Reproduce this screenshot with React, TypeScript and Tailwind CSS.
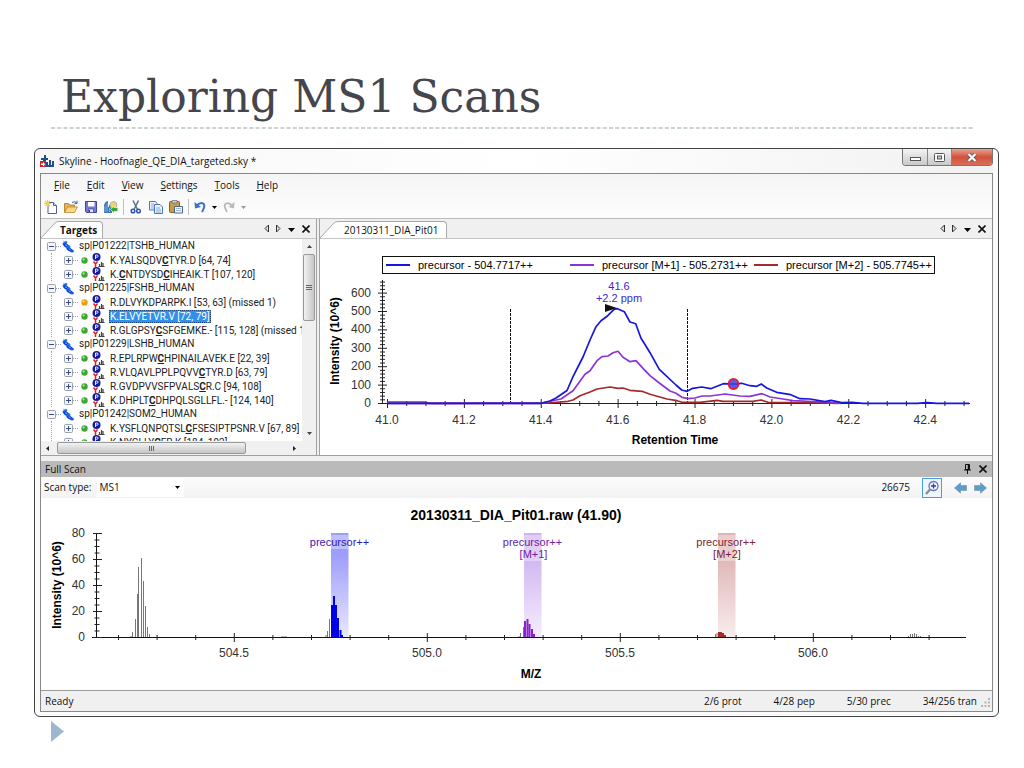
import { ReactNode, useState } from 'react';

const UI = "font-['Open_Sans','Noto_Sans',sans-serif]";
const ARIAL = "font-['Liberation_Sans',Arial,sans-serif]";

type Peptide = { seq: string; range: string; dot?: string };
type Protein = { name: string; peptides: Peptide[] };

// '*' marks the modified cysteine that follows it
const proteins: Protein[] = [
  {
    name: 'sp|P01222|TSHB_HUMAN',
    peptides: [
      { seq: 'K.YALSQDV*CTYR.D', range: '[64, 74]' },
      { seq: 'K.*CNTDYSD*CIHEAIK.T', range: '[107, 120]' },
    ],
  },
  {
    name: 'sp|P01225|FSHB_HUMAN',
    peptides: [
      { seq: 'R.DLVYKDPARPK.I', range: '[53, 63] (missed 1)', dot: '#e8a010' },
      { seq: 'K.ELVYETVR.V', range: '[72, 79]' },
      { seq: 'R.GLGPSY*CSFGEMKE.-', range: '[115, 128] (missed 1)' },
    ],
  },
  {
    name: 'sp|P01229|LSHB_HUMAN',
    peptides: [
      { seq: 'R.EPLRPW*CHPINAILAVEK.E', range: '[22, 39]' },
      { seq: 'R.VLQAVLPPLPQVV*CTYR.D', range: '[63, 79]' },
      { seq: 'R.GVDPVVSFPVALS*CR.C', range: '[94, 108]' },
      { seq: 'K.DHPLT*CDHPQLSGLLFL.-', range: '[124, 140]' },
    ],
  },
  {
    name: 'sp|P01242|SOM2_HUMAN',
    peptides: [
      { seq: 'K.YSFLQNPQTSL*CFSESIPTPSNR.V', range: '[67, 89]' },
      { seq: 'K.NYGLLY*CFR.K', range: '[184, 192]' },
    ],
  },
];

const menus = ['File', 'Edit', 'View', 'Settings', 'Tools', 'Help'];

function AppIcon() {
  return (
    <svg className="w-[14px] h-[13px]" viewBox="0 0 14 13">
      <path d="M4 0h2v3h2v2H6v2H3V5H1V3h3z" fill="#1d4f91" />
      <path d="M0 6h6v6H0z" fill="#d3222a" />
      <path d="M1 8.500h2V7l2.200 2.200L3 11.500V10H1z" fill="#fff" />
      <path d="M6 12V7h2v3h1V5h2v5h1V6h2v6z" fill="#1d4f91" />
    </svg>
  );
}

function ExpandBox({ open, onClick, label }: { open: boolean; onClick?: () => void; label: string }) {
  return (
    <button aria-label={label} onClick={onClick} className="block shrink-0 w-[9px] h-[9px]">
      <svg viewBox="0 0 9 9" className="w-[9px] h-[9px]">
        <rect x="0.5" y="0.5" width="8" height="8" rx="1" fill="#f4f5f8" stroke="#9aa1ac" />
        <path d={open ? 'M2 4.500h5' : 'M2 4.500h5M4.500 2v5'} stroke="#3b4c86" />
      </svg>
    </button>
  );
}

function ProteinIcon() {
  return (
    <svg className="w-3 h-[13px] shrink-0" viewBox="0 0 12 13">
      <ellipse cx="3" cy="3" rx="2.600" ry="1.600" transform="rotate(-35 3 3)" fill="#1a78e6" />
      <ellipse cx="4" cy="5.500" rx="3" ry="1.800" transform="rotate(25 4 5.500)" fill="#0b3fd0" />
      <ellipse cx="6.300" cy="7.300" rx="2.400" ry="1.700" transform="rotate(-35 6.300 7.300)" fill="#1a78e6" />
      <ellipse cx="7.500" cy="9.500" rx="3" ry="1.700" transform="rotate(25 7.500 9.500)" fill="#0b3fd0" />
      <ellipse cx="10" cy="11" rx="1.900" ry="1.500" fill="#1558dc" />
      <path d="M1 .8l1.500.8M3 4.800l2 .8M6.500 8.800l2 .8" stroke="#7cc4fa" strokeWidth="0.900" />
    </svg>
  );
}

function PeptideIcon() {
  return (
    <svg className="w-[14px] h-[14px] shrink-0" viewBox="0 0 14 14">
      <circle cx="5.500" cy="4" r="4" fill="#131a9c" />
      <path d="M4.500 6V2h1.500a1 1 0 0 1 0 2.200H4.500" fill="none" stroke="#fff" strokeWidth="0.900" />
      <path d="M2.500 8.500l2 2.500 2-2.500M4.500 11v3" fill="none" stroke="#e32020" strokeWidth="1.500" />
      <path d="M7.500 13.500h6M8.500 13v-2M10.500 13V9M12 13v-3" stroke="#444" strokeWidth="1.200" />
    </svg>
  );
}

function Sequence({ seq }: { seq: string }) {
  return (
    <>
      {seq.split('*').map((part, i) =>
        i === 0 ? part : (
          <span key={i}>
            <b className="underline">{part[0]}</b>
            {part.slice(1)}
          </span>
        )
      )}
    </>
  );
}

function TargetsTree() {
  const [closed, setClosed] = useState<string[]>([]);
  const [selected, setSelected] = useState('K.ELVYETVR.V');

  const toggle = (name: string) =>
    setClosed(closed.includes(name) ? closed.filter(c => c !== name) : [...closed, name]);

  return (
    <ul className="flex-1 min-w-0 overflow-hidden pl-[6px] text-[10px] leading-[14px] whitespace-nowrap text-[#222] font-['Roboto','Liberation_Sans',sans-serif]">
      {proteins.map(protein => (
        <li key={protein.name}>
          <div className="flex items-center h-[14px]">
            <ExpandBox open={!closed.includes(protein.name)} onClick={() => toggle(protein.name)} label={`Toggle ${protein.name}`} />
            <span className="w-[5px] mr-px shrink-0 border-t border-dotted border-gray-400" />
            <ProteinIcon />
            <span className="ml-[5px]">{protein.name}</span>
          </div>
          {!closed.includes(protein.name) && (
            <ul className="ml-1 border-l border-dotted border-gray-400">
              {protein.peptides.map(pep => (
                <li key={pep.seq} className="flex items-center h-[14px] pl-3">
                  <ExpandBox open={false} label={`Expand ${pep.seq}`} />
                  <span className="w-[5px] mr-[3px] shrink-0 border-t border-dotted border-gray-400" />
                  <svg className="w-[7px] h-[7px] mr-[3px] shrink-0" viewBox="0 0 7 7">
                    <circle cx="3.500" cy="3.500" r="3.200" fill={pep.dot ?? '#3fa535'} />
                    <circle cx="2.600" cy="2.400" r="1.100" fill="#fff" opacity="0.600" />
                  </svg>
                  <PeptideIcon />
                  <button
                    onClick={() => setSelected(pep.seq)}
                    className={`ml-1 px-px h-[13px] leading-[13px] shrink-0 ${
                      selected === pep.seq ? 'bg-[#3390e8] text-white outline-1 -outline-offset-1 outline-dotted outline-[#1a4a80]' : ''
                    }`}
                  >
                    <Sequence seq={pep.seq} /> {pep.range}
                  </button>
                </li>
              ))}
            </ul>
          )}
        </li>
      ))}
    </ul>
  );
}

function Tab({ children }: { children: ReactNode }) {
  return (
    <div className="flex self-end h-[17px]">
      <svg className="w-[18px] h-[17px]" viewBox="0 0 18 17">
        <path d="M0 17L13 3Q15 .5 18 .5V17z" fill="#fff" />
        <path d="M0 17L13 3Q15 .5 18 .5" fill="none" stroke="#a9a9a9" />
      </svg>
      <button className="border-t border-r border-[#a9a9a9] rounded-tr-sm bg-white">{children}</button>
    </div>
  );
}

function TabControls() {
  return (
    <div className="ml-auto flex items-center gap-[7px] pr-[6px]">
      <button aria-label="Previous tab">
        <svg className="w-[5px] h-[9px]" viewBox="0 0 5 9"><path d="M4.500 1v7L1 4.500z" fill="#ddd" stroke="#333" /></svg>
      </button>
      <button aria-label="Next tab">
        <svg className="w-[5px] h-[9px]" viewBox="0 0 5 9"><path d="M.5 1v7L4 4.500z" fill="#ddd" stroke="#333" /></svg>
      </button>
      <button aria-label="Tab list" className="pt-[3px]">
        <svg className="w-[7px] h-1" viewBox="0 0 7 4"><path d="M0 0h7L3.500 4z" /></svg>
      </button>
      <button aria-label="Close pane">
        <CloseMark />
      </button>
    </div>
  );
}

function CloseMark() {
  return (
    <svg className="w-2 h-2" viewBox="0 0 8 8"><path d="M.5.5l7 7M7.500.5l-7 7" stroke="#111" strokeWidth="1.600" /></svg>
  );
}

function Toolbar() {
  const tool = 'w-[14px] h-[14px]';
  return (
    <div className="flex items-center h-[22px] pl-[3px]">
      <button aria-label="New">
        <svg className={tool} viewBox="0 0 14 14">
          <path d="M4 2.500h5.500l3 3v8H4z" fill="#fff" stroke="#4a6794" />
          <path d="M9.500 2.500v3h3" fill="#cfdcf0" stroke="#4a6794" />
          <path d="M3.500 0v7M0 3.500h7M1 1l5 5M6 1L1 6" stroke="#f0d040" strokeWidth="1.100" />
        </svg>
      </button>
      <button aria-label="Open" className="ml-[6px]">
        <svg className={tool} viewBox="0 0 14 14">
          <path d="M.5 12.500v-9h4l1 1.500h5v2" fill="#e8b552" stroke="#a87422" strokeWidth="0.800" />
          <path d="M.5 12.500L3.500 7h10l-3 5.500z" fill="#fbd87f" stroke="#b98530" strokeWidth="0.800" />
          <path d="M8 2.500q3-2 5 .8M13 .8v2.800h-2.500" fill="none" stroke="#3d62a8" />
        </svg>
      </button>
      <button aria-label="Save" className="ml-[6px]">
        <svg className={tool} viewBox="0 0 14 14">
          <path d="M1.500 1.500h11v11h-10l-1-1z" fill="#7479dc" stroke="#41459c" />
          <path d="M4 2h6.500v4.500H4z" fill="#fff" />
          <path d="M4.500 9h5v3.500h-5z" fill="#e4e6f6" stroke="#30348a" strokeWidth="0.600" />
          <path d="M5.500 10v2" stroke="#30348a" />
        </svg>
      </button>
      <button aria-label="Publish" className="ml-[6px]">
        <svg className={tool} viewBox="0 0 14 14">
          <path d="M0 13V5l1.500-3L4 1v7l2-4 2 2v7z" fill="#3c78b4" />
          <path d="M1 12V6M3 12V3M5.500 12V8" stroke="#90c0e8" strokeWidth="0.800" />
          <circle cx="9.500" cy="5" r="3.500" fill="#f2d268" stroke="#7ea6cc" strokeWidth="0.600" />
          <path d="M13.800 7.500H10V6L6.500 9.500l3.500 3.500V11.500h3.800z" fill="#35a835" stroke="#fff" strokeWidth="0.600" />
        </svg>
      </button>
      <span className="h-4 mx-[5px] border-l border-[#c0c0c0]" />
      <button aria-label="Cut">
        <svg className={tool} viewBox="0 0 14 14">
          <path d="M4 .5l4.500 9M9.500 .5L5 9.500" stroke="#5d7183" strokeWidth="1.500" />
          <circle cx="4" cy="11" r="1.800" fill="none" stroke="#2c55b0" strokeWidth="1.500" />
          <circle cx="9.500" cy="11" r="1.800" fill="none" stroke="#2c55b0" strokeWidth="1.500" />
        </svg>
      </button>
      <button aria-label="Copy" className="ml-[6px]">
        <svg className={tool} viewBox="0 0 14 14">
          <path d="M.5 1.500h6l1.500 2v6.500H.5z" fill="#eef4fd" stroke="#4b77bd" />
          <path d="M5.500 4.500h5.500l2.500 2.500v6.500h-8z" fill="#eef4fd" stroke="#4b77bd" />
          <path d="M2 4h3M2 6h3M2 8h3M7 8h4M7 10h5M7 12h5" stroke="#6d94d0" strokeWidth="0.800" />
        </svg>
      </button>
      <button aria-label="Paste" className="ml-[6px]">
        <svg className={tool} viewBox="0 0 14 14">
          <rect x="0.500" y="1.500" width="10" height="11" rx="1" fill="#cd9a45" stroke="#87601f" />
          <path d="M3 0.500h5v2.500H3z" fill="#c9cdd4" stroke="#6b6b6b" strokeWidth="0.700" />
          <path d="M5.500 6.500h8v6.500h-8z" fill="#f3f6fb" stroke="#4a648f" />
          <path d="M7 8.500h5M7 10.500h5" stroke="#8aa3ca" strokeWidth="0.800" />
        </svg>
      </button>
      <span className="h-4 mx-[5px] border-l border-[#c0c0c0]" />
      <button aria-label="Undo">
        <svg className="w-3 h-[13px]" viewBox="0 0 12 13">
          <path d="M2.500 5Q6 1 9 2.500T8 11" fill="none" stroke="#3f6fc8" strokeWidth="2" />
          <path d="M.5 1l.5 6.500L7 6z" fill="#3f6fc8" />
        </svg>
      </button>
      <button aria-label="Undo history" className="ml-[6px]">
        <svg className="w-[5px] h-[3px]" viewBox="0 0 5 3"><path d="M0 0h5L2.500 3z" /></svg>
      </button>
      <button aria-label="Redo" className="ml-[6px]">
        <svg className="w-3 h-[13px]" viewBox="0 0 12 13">
          <path d="M9.500 5Q6 1 3 2.500T4 11" fill="none" stroke="#b9b9b9" strokeWidth="1.800" />
          <path d="M11.500 1l-.5 6.500L5.500 6z" fill="#b9b9b9" />
        </svg>
      </button>
      <button aria-label="Redo history" className="ml-[6px]">
        <svg className="w-[5px] h-[3px]" viewBox="0 0 5 3"><path d="M0 0h5L2.500 3z" fill="#999" /></svg>
      </button>
    </div>
  );
}

const range = (n: number) => Array.from({ length: n }, (_, i) => i);

// Chromatogram traces, in drawing units
const traces = [
  {
    color: '#a52a2a',
    points:
      '387,402 424,402 430,403.3 548,403 568,401.3 573,400 580,395.7 590,392 597,389 610,387 618,388.3 623,388 630,390.3 642,391.3 650,394.3 667,399 677,400.7 682,402.3 700,402.3 717,400.3 723,401.3 753,401.3 761,400 768,402.3 813,402.7 838,403.3',
  },
  {
    color: '#8a35d6',
    points:
      '387,403.3 541,403.3 549,401.5 561,399 573,390.7 585,374.3 590,370.7 597,360.7 602,356.7 608,356 613,352.7 618,351.3 623,357.3 630,361.7 636,360.7 643,368.3 650,375.7 658,382 670,391 676,393.3 682,397.3 688,398.7 695,398 702,396 710,396 725,394 740,396 750,396.3 762,393.7 770,397 783,399 793,400.7 823,402 841,403.3',
  },
  {
    color: '#1616e0',
    points:
      '387,403.3 541,403.3 550,401 556,398 567,390.5 573,376.7 583,357 590,340 596,326.7 601,320.7 607.7,315.7 614,309.3 617.5,308.7 624.3,311.7 630,322 635.7,323.7 641,338.3 645,344.5 650,352.7 659.3,369.3 676,385 681.7,390 687,391.3 692.7,388.3 701.7,387 710.7,388.7 723.3,383.7 733,384 741.7,383.3 750,385.7 756.7,386.3 761.3,384 766.7,388 776.7,392.3 790.7,394.7 800,398.7 810,399 825,401.7 831,400.3 841.7,402.7 852,402.3 863,403.3 917,403.3 927,402.7 937,403.3 969,403.3',
  },
];

const legend = [
  { color: '#1616e0', x: 386, text: 'precursor - 504.7717++', tx: 418 },
  { color: '#8a35d6', x: 570, text: 'precursor [M+1] - 505.2731++', tx: 602 },
  { color: '#a52a2a', x: 754, text: 'precursor [M+2] - 505.7745++', tx: 786 },
];

function Chromatogram() {
  return (
    <svg viewBox="320 239 672 216" className={`block w-full text-[12px] ${ARIAL}`} role="img">
      <rect x="382.500" y="256.500" width="552" height="17" fill="#fff" stroke="#111" />
      {legend.map(l => (
        <g key={l.text}>
          <path d={`M${l.x} 265h24`} stroke={l.color} strokeWidth="2" />
          <text x={l.tx} y="269" className="text-[11px]">{l.text}</text>
        </g>
      ))}

      <path d="M382.500 280v124M378 403.500h592" stroke="#222" />
      {range(34).map(i => (
        <path key={i} d={i % 5 === 0 ? `M378 ${403.5 - i * 3.68}h9` : `M380 ${403.5 - i * 3.68}h5`} stroke="#222" />
      ))}
      {range(7).map(i => (
        <text key={i} x="371" y={407 - i * 18.4} textAnchor="end" fill="#333">{i * 100}</text>
      ))}
      {range(31).map(i => (
        <path key={i} d={i % 4 === 0 ? `M${387.5 + i * 19.22} 399v9` : `M${387.5 + i * 19.22} 401v5`} stroke="#222" />
      ))}
      {range(8).map(i => (
        <text key={i} x={387 + i * 76.9} y="424" textAnchor="middle" fill="#333">{(41 + i * 0.2).toFixed(1)}</text>
      ))}
      <text x="675" y="444" textAnchor="middle" className="font-bold">Retention Time</text>
      <text transform="translate(339 341) rotate(-90)" textAnchor="middle" className="font-bold">Intensity (10^6)</text>

      <path d="M510.500 309v94M687.500 309v94" stroke="#111" strokeDasharray="3 1" />
      {traces.map(t => (
        <polyline key={t.color} points={t.points} fill="none" stroke={t.color} strokeWidth="1.700" strokeLinejoin="round" />
      ))}
      <path d="M605 304v8l12-4z" fill="#111" />
      <text textAnchor="middle" fill="#3a28d8" className="text-[11px]">
        <tspan x="619" y="290">41.6</tspan>
        <tspan x="619" y="302">+2.2 ppm</tspan>
      </text>
      <circle cx="733.500" cy="384" r="5" fill="#5a5af2" stroke="#ee1c2c" strokeWidth="1.800" />
      <path d="M729 384h9" stroke="#2626c8" />
    </svg>
  );
}

// Scan peaks as [x, height]
const scanPeaks: { color: string; width: number; peaks: number[][] }[] = [
  {
    color: '#777',
    width: 1,
    peaks: [
      [131, 1], [132.5, 5], [135.5, 18], [137.5, 43], [138.5, 70], [141.5, 79], [143.5, 56], [145.5, 31], [147.5, 10], [149.5, 3],
      [282, 1], [284, 1], [286, 1], [326, 2], [327.5, 6], [329.5, 18],
      [519, 1], [520.5, 4], [523.5, 10], [715.5, 3], [717, 4],
      [908.5, 1], [910.5, 3], [912.5, 3], [914.5, 4], [916.5, 3], [918.5, 1], [920.5, 1],
    ],
  },
  { color: '#0000e6', width: 2, peaks: [[332, 32], [334, 41], [336, 32], [338, 19], [340.5, 7], [342, 2]] },
  { color: '#8a1fd0', width: 2, peaks: [[525, 16], [527.5, 18], [529.5, 13], [532, 8], [534, 3]] },
  { color: '#a52a2a', width: 2, peaks: [[719, 5], [721, 5], [723, 4], [725, 2]] },
];

const bands = [
  { id: 'm0', x: 331, mid: 339.5, from: '#9d9dfa', to: '#e8e8ff', text: '#3318b8', lines: ['precursor++'] },
  { id: 'm1', x: 524, mid: 532.5, from: '#cfb4f0', to: '#f5edfd', text: '#6a22a8', lines: ['precursor++', '[M+1]'] },
  { id: 'm2', x: 718, mid: 726, from: '#dfb4b4', to: '#f8eded', text: '#7d2434', lines: ['precursor++', '[M+2]'] },
];

function ScanChart() {
  return (
    <svg viewBox="41 498 951 192" className={`block w-full text-[12px] ${ARIAL}`} role="img">
      <text x="516" y="520" textAnchor="middle" className="text-[14px] font-bold">20130311_DIA_Pit01.raw (41.90)</text>
      {bands.map(b => (
        <g key={b.id}>
          <linearGradient id={b.id} x1="0" y1="0" x2="0" y2="1">
            <stop offset="0.200" stopColor={b.from} />
            <stop offset="1" stopColor={b.to} />
          </linearGradient>
          <rect x={b.x} y="533" width="17.500" height="104" fill={`url(#${b.id})`} />
          <rect x={b.x} y="535" width="17.500" height={b.lines.length * 12 + 2} fill="#fff" opacity="0.350" />
          {b.lines.map((line, i) => (
            <text key={line} x={b.mid + (i ? 1 : 0)} y={546 + i * 12} textAnchor="middle" fill={b.text} className="text-[11px]">{line}</text>
          ))}
        </g>
      ))}
      {scanPeaks.map(s =>
        s.peaks.map(([x, h]) => (
          <path key={`${s.color}${x}`} d={`M${x} 637v-${h}`} stroke={s.color} strokeWidth={s.width} />
        ))
      )}
      <path d="M96.500 533v104M92 637.500h874" stroke="#111" />
      {range(17).map(i => (
        <path key={i} d={i % 4 === 0 ? `M93 ${637.5 - i * 6.5}h9` : `M94.500 ${637.5 - i * 6.5}h5`} stroke="#222" />
      ))}
      {range(5).map(i => (
        <text key={i} x="85" y={641 - i * 26} textAnchor="end" fill="#333">{i * 20}</text>
      ))}
      {range(22).map(i => (
        <path key={i} d={(i + 2) % 5 === 0 ? `M${118.5 + i * 38.6} 633v9` : `M${118.5 + i * 38.6} 635v5`} stroke="#222" />
      ))}
      {range(4).map(i => (
        <text key={i} x={234 + i * 193} y="657" textAnchor="middle" fill="#333">{(504.5 + i * 0.5).toFixed(1)}</text>
      ))}
      <text x="531" y="678" textAnchor="middle" className="font-bold">M/Z</text>
      <text transform="translate(61 585) rotate(-90)" textAnchor="middle" className="font-bold">Intensity (10^6)</text>
    </svg>
  );
}

function FullScanBar() {
  return (
    <div className="flex items-center h-[21px] pl-[3px] pr-[5px] bg-linear-to-b from-[#fcfcfc] to-[#f3f3f3]">
      <label htmlFor="scan-type">Scan type:</label>
      <div className="relative ml-[5px]">
        <select id="scan-type" className="appearance-none block w-[87px] h-[19px] pl-[3px] bg-white">
          <option>MS1</option>
          <option>MS/MS</option>
        </select>
        <svg className="absolute right-1 top-2 w-[5px] h-[3px] pointer-events-none" viewBox="0 0 5 3"><path d="M0 0h5L2.500 3z" /></svg>
      </div>
      <span className="ml-auto">26675</span>
      <button aria-label="Zoom to selection" className="ml-3 flex items-center justify-center w-5 h-5 border border-[#4a9be0] bg-[#eef5fc]">
        <svg className="w-4 h-4" viewBox="0 0 16 16">
          <circle cx="9.500" cy="6" r="4.500" fill="#f3f5ff" stroke="#6674b8" strokeWidth="1.300" />
          <path d="M9.500 3.500v5M7 6h5" stroke="#2a3fae" strokeWidth="1.300" />
          <path d="M6 9.500L2 14" stroke="#8b8b95" strokeWidth="2.400" />
        </svg>
      </button>
      <button aria-label="Previous scan" className="ml-3">
        <svg className="w-[13px] h-3" viewBox="0 0 13 12"><path d="M.5 6L6.500.8V3.500h6v5h-6v2.700z" fill="#5b9fc8" stroke="#7c98b0" strokeWidth="0.700" /></svg>
      </button>
      <button aria-label="Next scan" className="ml-[7px]">
        <svg className="w-[13px] h-3" viewBox="0 0 13 12"><path d="M12.500 6L6.500.8V3.500h-6v5h6v2.700z" fill="#5b9fc8" stroke="#7c98b0" strokeWidth="0.700" /></svg>
      </button>
    </div>
  );
}

function WindowButtons() {
  return (
    <div className="flex self-start ml-auto h-[17px] border border-t-0 border-[#777] rounded-b overflow-hidden">
      <button aria-label="Minimize" className="flex items-center justify-center w-[25px] bg-linear-to-b from-[#f4f4f4] to-[#c9c9c9] border-r border-[#888]">
        <svg className="w-[11px] h-1 mt-1" viewBox="0 0 11 4"><rect x="0.500" y="0.500" width="10" height="3" fill="#fff" stroke="#555" /></svg>
      </button>
      <button aria-label="Maximize" className="flex items-center justify-center w-6 bg-linear-to-b from-[#f4f4f4] to-[#c9c9c9] border-r border-[#888]">
        <svg className="w-[11px] h-[9px]" viewBox="0 0 11 9">
          <rect x="0.500" y="0.500" width="10" height="8" rx="1" fill="#fff" stroke="#555" />
          <rect x="3.500" y="3" width="4" height="3" fill="#ccc" stroke="#555" />
        </svg>
      </button>
      <button aria-label="Close" className="flex items-center justify-center w-10 bg-linear-to-b from-[#e8a294] via-[#d2503c] to-[#d8705a]">
        <svg className="w-[10px] h-[9px]" viewBox="0 0 10 9">
          <path d="M1.500 1l7 7M8.500 1l-7 7" stroke="#555" strokeWidth="3.600" />
          <path d="M1.500 1l7 7M8.500 1l-7 7" stroke="#fff" strokeWidth="2.200" />
        </svg>
      </button>
    </div>
  );
}

function SkylineWindow() {
  return (
    <section className={`ml-[34px] mr-[25px] border border-[#444] rounded-md px-[5px] pb-1 bg-[#fafafa] text-[10px] text-[#111] ${UI}`}>
      <div className="flex items-center h-6 gap-[5px] bg-linear-to-r from-[#f6f6f6] via-white to-[#f2f2f2]">
        <AppIcon />
        <span>Skyline - Hoofnagle_QE_DIA_targeted.sky *</span>
        <WindowButtons />
      </div>

      <div className="border border-[#888] bg-[#f0f0f0]">
        <div className="bg-linear-to-b from-[#f5f5f5] to-[#fdfdfd] border-b border-[#bbb]">
          <nav className="flex items-center gap-[17px] h-[22px] pl-[13px]">
            {menus.map(m => (
              <button key={m}>
                <span className="underline">{m[0]}</span>
                {m.slice(1)}
              </button>
            ))}
          </nav>
          <Toolbar />
        </div>

        <div className="flex">
          <div className="flex flex-col w-[276px] border-r border-[#a0a0a0]">
            <div className="flex h-5 items-center border-b border-[#c4c4c4]">
              <Tab><span className="block pr-[5px] pl-px font-bold">Targets</span></Tab>
              <TabControls />
            </div>
            <div className="flex h-[202px] bg-white">
              <TargetsTree />
              <div className="flex flex-col items-center justify-between w-[14px] py-[6px] bg-[#f0f0f0]">
                <svg className="w-[5px] h-[3px]" viewBox="0 0 5 3"><path d="M0 3h5L2.500 0z" fill="#444" /></svg>
                <div className="flex flex-col items-center justify-center gap-px w-3 h-[67px] mb-auto mt-[6px] border border-[#999] rounded-xs bg-linear-to-r from-[#f2f2f2] to-[#c6c6c6]">
                  <span className="w-[6px] h-px bg-[#666]" />
                  <span className="w-[6px] h-px bg-[#666]" />
                  <span className="w-[6px] h-px bg-[#666]" />
                </div>
                <svg className="w-[5px] h-[3px]" viewBox="0 0 5 3"><path d="M0 0h5L2.500 3z" fill="#444" /></svg>
              </div>
            </div>
            <div className="flex items-center h-[14px] pl-[5px] pr-5 bg-[#f0f0f0]">
              <svg className="w-[3px] h-[5px]" viewBox="0 0 3 5"><path d="M3 0v5L0 2.500z" fill="#222" /></svg>
              <div className="flex items-center justify-center gap-px w-[189px] h-3 ml-2 border border-[#999] rounded-xs bg-linear-to-b from-[#f2f2f2] to-[#c6c6c6]">
                <span className="w-px h-[5px] bg-[#666]" />
                <span className="w-px h-[5px] bg-[#666]" />
                <span className="w-px h-[5px] bg-[#666]" />
              </div>
              <svg className="w-[3px] h-[5px] ml-auto" viewBox="0 0 3 5"><path d="M0 0v5L3 2.500z" fill="#222" /></svg>
            </div>
          </div>
          <div className="flex-1 min-w-0 ml-[2px] border-l border-[#a0a0a0] bg-white">
            <div className="flex h-5 items-center bg-[#f0f0f0] border-b border-[#c4c4c4]">
              <Tab><span className="block pl-[6px] pr-2">20130311_DIA_Pit01</span></Tab>
              <TabControls />
            </div>
            <Chromatogram />
          </div>
        </div>

        <div className="h-[6px] border-t border-[#a0a0a0]" />
        <div className="flex items-center h-4 pl-1 pr-[5px] bg-[#bababa]">
          <span>Full Scan</span>
          <button aria-label="Auto hide" className="ml-auto">
            <svg className="w-[7px] h-[10px]" viewBox="0 0 7 10">
              <path d="M1.500.5h4v5h-4zM0 6h7M3.500 6v4" fill="none" stroke="#111" />
              <path d="M4.500 1v5" stroke="#111" strokeWidth="1.500" />
            </svg>
          </button>
          <button aria-label="Close full scan" className="ml-2"><CloseMark /></button>
        </div>
        <FullScanBar />
        <div className="bg-white">
          <ScanChart />
        </div>

        <footer className="flex items-center h-[21px] pl-1 pr-[2px] border-t border-[#999]">
          <span className="mr-auto">Ready</span>
          <span>2/6 prot</span>
          <span className="ml-8">4/28 pep</span>
          <span className="ml-8">5/30 prec</span>
          <span className="ml-8">34/256 tran</span>
          <svg className="w-[9px] h-[9px] ml-1 self-end mb-1" viewBox="0 0 9 9">
            <path d="M7 0h2v2H7zM7 3.500h2v2H7zM7 7h2v2H7zM3.500 3.500h2v2h-2zM3.500 7h2v2h-2zM0 7h2v2H0z" fill="#b5b5b5" />
          </svg>
        </footer>
      </div>
    </section>
  );
}

export default function App() {
  return (
    <main className="min-h-screen bg-white">
      <header className="pt-[69px] pl-[51px] pr-[51px]">
        <h1 className="pl-[10px] text-[44px] leading-[56px] text-[#45464c] font-['DejaVu_Serif',serif]">Exploring MS1 Scans</h1>
        <svg className="block w-full h-[6px]">
          <line x1="0" y1="3" x2="100%" y2="3" stroke="#b9c3c7" strokeWidth="1.500" strokeDasharray="4 2.200" />
        </svg>
      </header>
      <div className="pt-[17px]">
        <SkylineWindow />
      </div>
      <svg className="block mt-1 ml-[51px] w-[13px] h-[21px]" viewBox="0 0 13 21"><path d="M0 0v21L13 10.500z" fill="#9fb6cf" /></svg>
    </main>
  );
}
